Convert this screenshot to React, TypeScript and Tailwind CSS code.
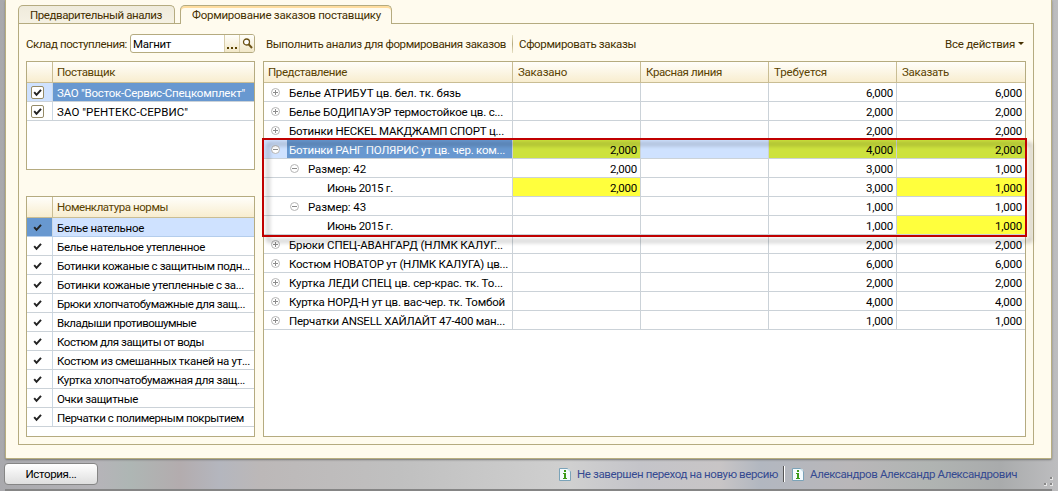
import { useLayoutEffect, useRef } from "react";

function T({ w, children, className = "" }: { w: number; children: string; className?: string }) {
  const ref = useRef<HTMLSpanElement>(null);
  useLayoutEffect(() => {
    const el = ref.current;
    if (!el) return;
    el.style.letterSpacing = "0px";
    el.style.letterSpacing = (w - el.getBoundingClientRect().width) / children.length + "px";
  }, [w, children]);
  return (
    <span ref={ref} className={"inline-block whitespace-nowrap " + className}>
      {children}
    </span>
  );
}

type Row = { level: number; icon?: "+" | "-"; name: string; w: number; vals: [string, string, string, string]; marked?: number[]; selected?: boolean };

const rows: Row[] = [
  { level: 0, icon: "+", name: "Белье АТРИБУТ цв. бел. тк. бязь", w: 172, vals: ["", "", "6,000", "6,000"] },
  { level: 0, icon: "+", name: "Белье БОДИПАУЭР термостойкое цв. с...", w: 214, vals: ["", "", "2,000", "2,000"] },
  { level: 0, icon: "+", name: "Ботинки HECKEL МАКДЖАМП СПОРТ ц...", w: 215, vals: ["", "", "2,000", "2,000"] },
  { level: 0, icon: "-", name: "Ботинки РАНГ ПОЛЯРИС ут цв. чер. ком...", w: 216, vals: ["2,000", "", "4,000", "2,000"], selected: true },
  { level: 1, icon: "-", name: "Размер: 42", w: 58, vals: ["2,000", "", "3,000", "1,000"] },
  { level: 2, name: "Июнь 2015 г.", w: 66, vals: ["2,000", "", "3,000", "1,000"], marked: [0, 3] },
  { level: 1, icon: "-", name: "Размер: 43", w: 58, vals: ["", "", "1,000", "1,000"] },
  { level: 2, name: "Июнь 2015 г.", w: 66, vals: ["", "", "1,000", "1,000"], marked: [3] },
  { level: 0, icon: "+", name: "Брюки СПЕЦ-АВАНГАРД (НЛМК КАЛУГ...", w: 214, vals: ["", "", "2,000", "2,000"] },
  { level: 0, icon: "+", name: "Костюм НОВАТОР ут (НЛМК КАЛУГА) цв...", w: 219, vals: ["", "", "6,000", "6,000"] },
  { level: 0, icon: "+", name: "Куртка ЛЕДИ СПЕЦ цв. сер-крас. тк. То...", w: 214, vals: ["", "", "2,000", "2,000"] },
  { level: 0, icon: "+", name: "Куртка НОРД-Н ут цв. вас-чер. тк. Томбой", w: 216, vals: ["", "", "4,000", "4,000"] },
  { level: 0, icon: "+", name: "Перчатки ANSELL ХАЙЛАЙТ 47-400 ман...", w: 216, vals: ["", "", "1,000", "1,000"] },
];

const norms: [string, number][] = [
  ["Белье нательное", 87],
  ["Белье нательное утепленное", 148],
  ["Ботинки кожаные с защитным подн...", 193],
  ["Ботинки кожаные утепленные с за...", 187],
  ["Брюки хлопчатобумажные для защ...", 188],
  ["Вкладыши противошумные", 139],
  ["Костюм для защиты от воды", 147],
  ["Костюм из смешанных тканей на ут...", 193],
  ["Куртка хлопчатобумажная для защ...", 188],
  ["Очки защитные", 81],
  ["Перчатки с полимерным покрытием", 187],
];

const Check = () => (
  <svg className="h-[9px] w-[9px]" viewBox="0 0 9 9">
    <path d="M1.2 4.2 3.5 6.8 8 1.8" fill="none" stroke="#222" strokeWidth="2" />
  </svg>
);

const Expander = ({ kind }: { kind: "+" | "-" }) => (
  <svg className="block h-[9px] w-[9px] shrink-0" viewBox="0 0 9 9">
    <circle cx="4.5" cy="4.5" r="4" fill="#fff" stroke="#b4b4b4" />
    <path d={kind === "+" ? "M2 4.5H7M4.5 2V7" : "M2 4.5H7"} stroke="#8c8c8c" />
  </svg>
);

const InfoIcon = () => (
  <svg className="block h-[13px] w-[12px] shrink-0" viewBox="0 0 12 13">
    <path d="M.5.5H8.5L11.5 3.5V12.5H.5Z" fill="#f4fbfe" stroke="#7ba3b8" />
    <path d="M8 1 11 4V1Z" fill="#c3dce6" />
    <path d="M5 2h2v2H5zM4 5h3v5h1v1H4v-1h1V6H4z" fill="#3b9a18" />
  </svg>
);

const headBg = "bg-linear-to-b from-[#fffefa] to-[#f8edcf] border-b border-[#c9bd94] text-[#5a4200]";
const fieldButton = "border-l border-[#d8ceaa] bg-linear-to-b from-[#fffefa] to-[#f2e8c8]";

export default function App() {
  return (
    <div className="relative flex h-[491px] w-[1058px] flex-col overflow-hidden bg-[linear-gradient(90deg,#a9a9ad_0,#b5b4b8_100px,#aeb6b4_130px,#b3acae_180px,#b4b6be_220px,#bcb8b8_260px,#c0c0c0_400px,#d0d0d0_570px,#c4c4c9_640px,#c8c5c6_720px,#b2b7c0_760px,#b9b7b9_850px,#b0b4b2_930px,#a9abac_1000px,#bdbdbf_1058px)] pl-[5px] pr-[6px] font-['Roboto',sans-serif] text-[11.5px] leading-[18px] text-black">
      <main className="flex h-[459px] shrink-0 flex-col rounded-b-[2px] border-x border-b border-[#b8ae80] bg-[#fffbee] pl-[12px] pr-[17px] pt-[5px] shadow-[0_1px_2px_#777]">
        <nav className="relative z-10 flex h-[19px] shrink-0 items-stretch">
          <div className="flex h-[18px] w-[157px] rounded-t-[5px] border border-b-0 border-[#b5ab80] bg-linear-to-b from-[#efebdc] to-[#f5f1e3] pl-[11px] leading-[19px] text-[#453000]">
            <T w={132}>Предварительный анализ</T>
          </div>
          <div className="ml-[5px] h-[19px] w-[212px] rounded-t-[5px] border border-b-0 border-[#b5ab80] bg-[#fffbee] pl-[11px] leading-[19px] text-[#453000] shadow-[inset_0_2px_0_#ffdd9f]">
            <T w={189}>Формирование заказов поставщику</T>
          </div>
        </nav>
        <section className="-mt-px flex h-[422px] shrink-0 flex-col border border-[#b5ab80] px-[7px] pt-[10px]">
          <div className="flex h-[19px] shrink-0 items-center text-[#453000]">
            <T w={101} className="mr-[3px]">Склад поступления:</T>
            <div className="flex h-[19px] w-[125px] overflow-hidden rounded-[3px] border border-[#b5ab80] bg-white text-black">
              <div className="w-[93px] pl-[2px] leading-[18px]"><T w={38}>Магнит</T></div>
              <div className={"flex w-[15px] items-end justify-center gap-[2px] pb-[3px] " + fieldButton}>
                <i className="h-[2px] w-[2px] bg-[#5a4200]" /><i className="h-[2px] w-[2px] bg-[#5a4200]" /><i className="h-[2px] w-[2px] bg-[#5a4200]" />
              </div>
              <div className={"flex flex-1 items-center justify-center " + fieldButton}>
                <svg className="h-[11px] w-[11px]" viewBox="0 0 11 11"><circle cx="4.5" cy="4" r="3" fill="#fff" stroke="#6b5215" strokeWidth="1.3" /><path d="M6.7 6.4 10 10" stroke="#6b5215" strokeWidth="2" /></svg>
              </div>
            </div>
            <T w={240} className="ml-[11px]">Выполнить анализ для формирования заказов</T>
            <i className="mx-[6px] h-[18px] w-px bg-linear-to-b from-[#e8e1c5] via-[#b5ab80] to-[#e8e1c5]" />
            <T w={117}>Сформировать заказы</T>
            <T w={70} className="ml-auto">Все действия</T>
            <svg className="ml-[3px] mr-[2px] h-[3px] w-[6px]" viewBox="0 0 6 3"><path d="M0 0H6L3 3Z" fill="#453000" /></svg>
          </div>
          <div className="mt-[8px] flex h-[376px] gap-[8px]">
            <aside className="flex w-[229px] shrink-0 flex-col justify-between">
              <div className="h-[109px] border border-[#b5ab80] bg-white">
                <div className={"flex h-[21px] " + headBg}>
                  <div className="w-[26px] border-r border-[#c9bd94]" />
                  <T w={58} className="ml-[4px] leading-[21px]">Поставщик</T>
                </div>
                {([["ЗАО \"Восток-Сервис-Спецкомплект\"", 188], ["ЗАО \"РЕНТЕКС-СЕРВИС\"", 131]] as [string, number][]).map(([name, w], i) => (
                  <div key={name} className="flex h-[19px] border-b border-[#cbd2d8]">
                    <div className={"flex w-[26px] items-center border-r border-[#cbd8e4] pl-[4px] " + (i === 0 ? "bg-[#cfe2ff]" : "")}>
                      <div className="flex h-[13px] w-[13px] items-center justify-center rounded-[2px] border border-[#958b68] bg-white"><Check /></div>
                    </div>
                    <div className={"flex-1 pl-[4px] leading-[20px] " + (i === 0 ? "bg-[#6898d0] text-white" : "")}><T w={w}>{name}</T></div>
                  </div>
                ))}
              </div>
              <div className="h-[241px] border border-[#b5ab80] bg-white">
                <div className={"flex h-[21px] " + headBg}>
                  <div className="w-[26px] border-r border-[#c9bd94]" />
                  <T w={111} className="ml-[4px] leading-[21px]">Номенклатура нормы</T>
                </div>
                {norms.map(([name, w], i) => (
                  <div key={name} className={"flex h-[19px] border-b " + (i === 0 ? "border-[#b4cdec] bg-[#cfe2ff]" : "border-[#cbd2d8]")}>
                    <div className={"flex w-[26px] items-center border-r border-[#cbd8e4] pl-[6px] " + (i === 0 ? "bg-[#6898d0]" : "")}><Check /></div>
                    <T w={w} className="ml-[4px] leading-[20px]">{name}</T>
                  </div>
                ))}
              </div>
            </aside>
            <div className="relative w-[763px] border border-[#b5ab80] bg-white">
              <div className={"grid h-[21px] grid-cols-[249px_128px_128px_128px_128px] " + headBg}>
                {([["Представление", 79], ["Заказано", 49], ["Красная линия", 76], ["Требуется", 53], ["Заказать", 47]] as [string, number][]).map(([name, w], i) => (
                  <div key={name} className={(i === 0 ? "pl-[4px]" : "pl-[5px]") + " leading-[21px] " + (i < 4 ? "border-r border-[#c9bd94]" : "")}><T w={w}>{name}</T></div>
                ))}
              </div>
              {rows.map((r, i) => (
                <div key={i} className="grid h-[19px] grid-cols-[249px_128px_128px_128px_128px] grid-rows-[19px] leading-[20px]">
                  <div className={"flex h-[19px] items-center border-b border-r border-[#cbd2d8] " + (r.level === 0 ? "pl-[7px]" : r.level === 1 ? "pl-[26px]" : "pl-[63px]") + (r.selected ? " bg-[linear-gradient(90deg,#cfe2ff_23px,#6898d0_23px)] text-white" : "")}>
                    {r.icon && <span className="mr-[9px]"><Expander kind={r.icon} /></span>}
                    <T w={r.w} className="mt-[2px]">{r.name}</T>
                  </div>
                  {r.vals.map((v, c) => (
                    <div key={c} className={"h-[19px] border-b border-[#cbd2d8] pr-[3px] text-right " + (c < 3 ? "border-r " : "") + (r.selected ? (c === 1 ? "bg-[#cfe2ff]" : "bg-[#cde23d]") : r.marked?.includes(c) ? "bg-[#ffff3d]" : "")}>
                      {v && <T w={27}>{v}</T>}
                    </div>
                  ))}
                </div>
              ))}
              <div className="pointer-events-none absolute left-[-2px] top-[76px] h-[99px] w-[765px] border-2 border-[#c00000] drop-shadow-[5px_5px_2px_rgba(0,0,0,0.33)]" />
            </div>
          </div>
        </section>
      </main>
      <footer className="flex h-[32px] items-center border-b-2 border-[#858585] text-[#354a91]">
        <button className="-ml-px h-[22px] w-[94px] rounded-[4px] border border-[#858585] bg-linear-to-b from-white to-[#dedede] leading-[20px] text-black"><T w={51}>История...</T></button>
        <span className="ml-[461px]"><InfoIcon /></span>
        <T w={201} className="ml-[6px]">Не завершен переход на новую версию</T>
        <i className="ml-[5px] h-[16px] w-[2px] border-l border-[#555] bg-white" />
        <span className="ml-[7px]"><InfoIcon /></span>
        <T w={207} className="ml-[6px]">Александров Александр Александрович</T>
      </footer>
      <svg className="absolute bottom-[4px] right-[4px] h-[11px] w-[11px]" viewBox="0 0 11 11"><path d="M7 1h3v3H7zM1 7h3v3H1zM7 7h3v3H7z" fill="#e6e6e6" /><path d="M7 1h2v2H7zM1 7h2v2H1zM7 7h2v2H7z" fill="#888" /></svg>
    </div>
  );
}
